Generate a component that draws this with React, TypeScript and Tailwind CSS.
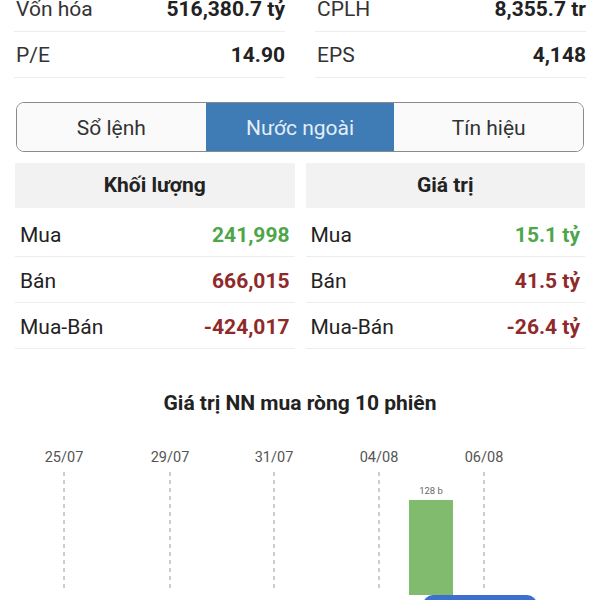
import React from "react";

const topRows = [
  [["Vốn hóa", "516,380.7 tỷ"], ["CPLH", "8,355.7 tr"]],
  [["P/E", "14.90"], ["EPS", "4,148"]],
];

type Row = { label: string; value: string; color: string };

const vol: Row[] = [
  { label: "Mua", value: "241,998", color: "text-[#4ea64a]" },
  { label: "Bán", value: "666,015", color: "text-[#8e2a2a]" },
  { label: "Mua-Bán", value: "-424,017", color: "text-[#8e2a2a]" },
];
const val: Row[] = [
  { label: "Mua", value: "15.1 tỷ", color: "text-[#4ea64a]" },
  { label: "Bán", value: "41.5 tỷ", color: "text-[#8e2a2a]" },
  { label: "Mua-Bán", value: "-26.4 tỷ", color: "text-[#8e2a2a]" },
];

function Table({ title, rows }: { title: string; rows: Row[] }) {
  return (
    <div className="flex flex-col">
      <div className="h-[45px] bg-[#f2f2f2] flex items-center justify-center text-[21px] font-bold text-[#222]">
        {title}
      </div>
      <div className="mt-[3px] flex flex-col">
        {rows.map((r) => (
          <div
            key={r.label}
            className="h-[46px] flex items-center justify-between pt-[5px] px-[5px] border-b border-[#ededed] text-[21px]"
          >
            <span className="text-[#222]">{r.label}</span>
            <span className={`font-bold ${r.color}`}>{r.value}</span>
          </div>
        ))}
      </div>
    </div>
  );
}

const dates = [
  { x: 64, t: "25/07" },
  { x: 170, t: "29/07" },
  { x: 274, t: "31/07" },
  { x: 379, t: "04/08" },
  { x: 484, t: "06/08" },
];

export default function App() {
  return (
    <div className="relative w-[600px] h-[600px] overflow-hidden bg-white font-['Roboto',sans-serif] text-[#222]">
      <div className="-mt-[14px] grid grid-cols-2 gap-x-[30px] px-[14px]">
        {[0, 1].map((col) => (
          <div key={col} className="flex flex-col">
            {topRows.map((row, i) => (
              <div
                key={i}
                className="h-[46px] flex items-center justify-between pt-[3px] pl-[2px] border-b border-[#ededed] text-[21px]"
              >
                <span className="text-[#333]">{row[col][0]}</span>
                <span className="font-bold text-[#222]">{row[col][1]}</span>
              </div>
            ))}
          </div>
        ))}
      </div>

      <div className="mt-[24px] mx-[16px] h-[50px] grid grid-cols-3 border-[1.5px] border-[#8a8a8a] rounded-[8px] overflow-hidden text-[21px]">
        <div className="flex items-center justify-center pt-[3px] bg-[#fafafa] text-[#333]">Sổ lệnh</div>
        <div className="flex items-center justify-center pt-[3px] bg-[#3f7bb4] text-[#e3eef8]">Nước ngoài</div>
        <div className="flex items-center justify-center pt-[3px] bg-[#fafafa] text-[#333]">Tín hiệu</div>
      </div>

      <div className="mt-[11px] grid grid-cols-2 gap-x-[11px] px-[15px]">
        <Table title="Khối lượng" rows={vol} />
        <Table title="Giá trị" rows={val} />
      </div>

      <div className="mt-[43px] h-[24px] flex items-center justify-center text-[21px] font-bold text-[#222]">
        Giá trị NN mua ròng 10 phiên
      </div>

      <svg className="mt-[23px] block" width="600" height="160" viewBox="0 0 600 160">
        {dates.map((d) => (
          <g key={d.t}>
            <text
              x={d.x}
              y={23}
              textAnchor="middle"
              fontSize="14.5"
              fill="#555"
              fontFamily="Roboto, sans-serif"
            >
              {d.t}
            </text>
            <line
              x1={d.x}
              y1={33}
              x2={d.x}
              y2={150}
              stroke="#9a9a9a"
              strokeWidth="1"
              strokeDasharray="4 4"
            />
          </g>
        ))}
        <rect x={409} y={61} width={44} height={95} fill="#80bb6e" />
        <text
          x={431}
          y={55}
          textAnchor="middle"
          fontSize="9.5"
          fill="#666"
          fontFamily="Roboto, sans-serif"
        >
          128 b
        </text>
      </svg>

      <div className="absolute left-[423px] top-[595px] w-[114px] h-[20px] rounded-t-[10px] bg-[#3d6fcf]" />
    </div>
  );
}
